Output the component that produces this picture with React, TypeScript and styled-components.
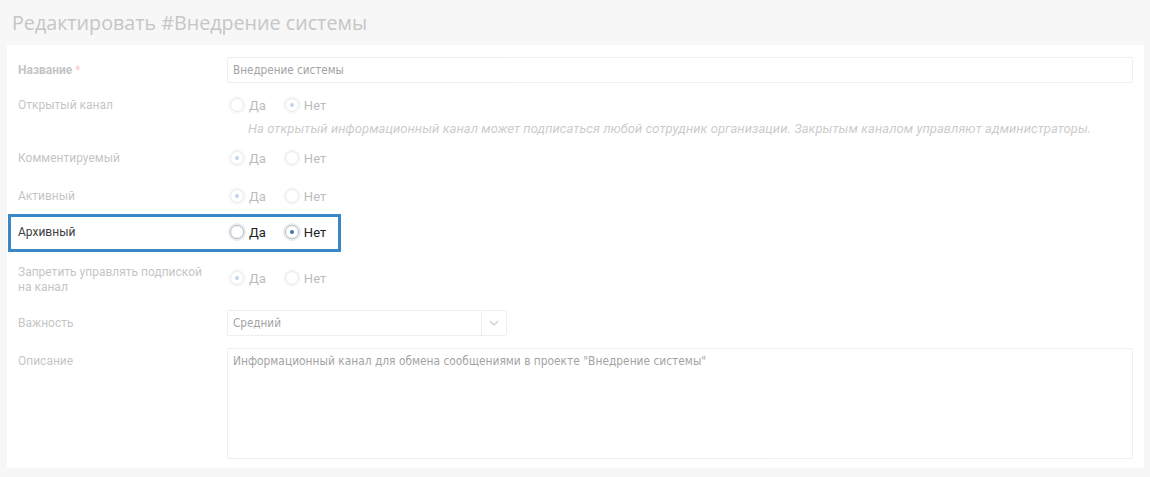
import React from "react";
import styled, { createGlobalStyle } from "styled-components";

const GlobalStyle = createGlobalStyle`
  html, body {
    margin: 0;
    padding: 0;
    background: #f7f7f7;
  }
  body {
    font-family: Roboto, "Liberation Sans", Arial, sans-serif;
    font-size: 12px;
    color: #444;
  }
`;

const Page = styled.div`
  width: 1150px;
  height: 477px;
  background: #f7f7f7;
  box-sizing: border-box;
  padding: 0 6px 0 7px;
`;

const Title = styled.h1`
  margin: 0;
  padding: 9px 0 0 5px;
  height: 36px;
  box-sizing: border-box;
  font-family: "Open Sans", "Liberation Sans", sans-serif;
  font-weight: 400;
  font-size: 19.7px;
  line-height: 28px;
  color: #c6c6c6;
`;

const Panel = styled.div`
  margin-top: 9px;
  background: #fff;
  padding: 12px 11px 10px 11px;
  height: 423px;
  box-sizing: border-box;
  display: flex;
  flex-direction: column;
`;

// --dim fades labels and radios, --field-dim fades the boxed inputs
const Row = styled.div<{ $dim?: boolean; $gap?: number }>`
  position: relative;
  display: grid;
  grid-template-columns: 209px 1fr;
  align-items: start;
  margin-bottom: ${(p) => p.$gap ?? 12}px;
  --dim: ${(p) => (p.$dim ? 0.3 : 1)};
  --field-dim: ${(p) => (p.$dim ? 0.6 : 1)};
`;

const Label = styled.div<{ $bold?: boolean; $top?: number }>`
  padding-top: ${(p) => p.$top ?? 6}px;
  font-size: 12px;
  line-height: 15px;
  color: #3d3d3d;
  font-weight: ${(p) => (p.$bold ? 700 : 400)};
  width: 190px;
  opacity: var(--dim, 1);
`;

const Star = styled.span`
  color: #e05050;
  font-weight: 400;
`;

const Field = styled.div`
  display: flex;
  flex-direction: column;
  min-width: 0;
`;

const TextInput = styled.div`
  height: 26px;
  box-sizing: border-box;
  border: 1px solid #e4e4e4;
  border-radius: 2px;
  padding: 0 5px;
  display: flex;
  align-items: center;
  font-family: "DejaVu Sans Condensed", "DejaVu Sans", Tahoma, sans-serif;
  font-size: 11.6px;
  color: #666;
  opacity: var(--field-dim, 1);
`;

const Radios = styled.div`
  height: 26px;
  display: flex;
  align-items: center;
  padding-left: 3px;
  opacity: var(--dim, 1);
`;

const Option = styled.label`
  display: flex;
  align-items: center;
  margin-right: 19px;
  font-size: 13px;
  color: #222;
`;

const Circle = styled.span<{ $on?: boolean }>`
  width: 14px;
  height: 14px;
  box-sizing: border-box;
  border-radius: 50%;
  border: 1px solid #b9b9b9;
  background: #fff;
  box-shadow: 0 0 0 2px #e7ecf3;
  margin-right: 5px;
  display: flex;
  align-items: center;
  justify-content: center;
  &::after {
    content: "";
    display: ${(p) => (p.$on ? "block" : "none")};
    width: 4px;
    height: 4px;
    border-radius: 50%;
    background: #3e6fb8;
  }
`;

const Hint = styled.div`
  font-style: italic;
  font-size: 13px;
  letter-spacing: 0.05px;
  white-space: nowrap;
  color: #555;
  margin: 3px 0 0 21px;
  line-height: 16px;
  opacity: var(--dim, 1);
`;

const Select = styled.div`
  width: 280px;
  height: 26px;
  box-sizing: border-box;
  border: 1px solid #e4e4e4;
  border-radius: 2px;
  display: flex;
  align-items: stretch;
  opacity: var(--field-dim, 1);
`;

const SelectValue = styled.div`
  flex: 1;
  display: flex;
  align-items: center;
  padding: 0 5px;
  font-family: "DejaVu Sans Condensed", "DejaVu Sans", Tahoma, sans-serif;
  font-size: 11.6px;
  color: #666;
`;

const SelectArrow = styled.div`
  width: 24px;
  border-left: 1px solid #e4e4e4;
  display: flex;
  align-items: center;
  justify-content: center;
`;

const TextArea = styled.div`
  height: 111px;
  box-sizing: border-box;
  border: 1px solid #e4e4e4;
  border-radius: 2px;
  padding: 5px 5px;
  font-family: "DejaVu Sans Condensed", "DejaVu Sans", Tahoma, sans-serif;
  font-size: 11.85px;
  line-height: 15px;
  color: #666;
  opacity: var(--field-dim, 1);
`;

const Highlight = styled.div`
  position: absolute;
  left: -10px;
  top: -5px;
  width: 333px;
  height: 38px;
  box-sizing: border-box;
  border: 3px solid #3a87c8;
  pointer-events: none;
`;

const YesNo = ({ yes }: { yes: boolean }) => (
  <Radios>
    <Option>
      <Circle $on={yes} />
      Да
    </Option>
    <Option>
      <Circle $on={!yes} />
      Нет
    </Option>
  </Radios>
);

const App = () => {
  return (
    <Page>
      <GlobalStyle />
      <Title>Редактировать #Внедрение системы</Title>
      <Panel>
        <Row $dim $gap={9}>
          <Label $bold>
            Название <Star>*</Star>
          </Label>
          <TextInput>Внедрение системы</TextInput>
        </Row>
        <Row $dim $gap={8}>
          <Label>Открытый канал</Label>
          <Field>
            <YesNo yes={false} />
            <Hint>
              На открытый информационный канал может подписаться любой
              сотрудник организации. Закрытым каналом управляют
              администраторы.
            </Hint>
          </Field>
        </Row>
        <Row $dim>
          <Label>Комментируемый</Label>
          <YesNo yes />
        </Row>
        <Row $dim $gap={10}>
          <Label>Активный</Label>
          <YesNo yes />
        </Row>
        <Row $gap={20}>
          <Label>Архивный</Label>
          <YesNo yes={false} />
          <Highlight />
        </Row>
        <Row $dim $gap={15}>
          <Label $top={0}>Запретить управлять подпиской на канал</Label>
          <YesNo yes />
        </Row>
        <Row $dim>
          <Label>Важность</Label>
          <Select>
            <SelectValue>Средний</SelectValue>
            <SelectArrow>
              <svg width="10" height="6" viewBox="0 0 10 6">
                <path d="M1 1l4 4 4-4" fill="none" stroke="#bbb" strokeWidth="1.6" />
              </svg>
            </SelectArrow>
          </Select>
        </Row>
        <Row $dim $gap={0}>
          <Label>Описание</Label>
          <TextArea>
            Информационный канал для обмена сообщениями в проекте "Внедрение
            системы"
          </TextArea>
        </Row>
      </Panel>
    </Page>
  );
};

export default App;
